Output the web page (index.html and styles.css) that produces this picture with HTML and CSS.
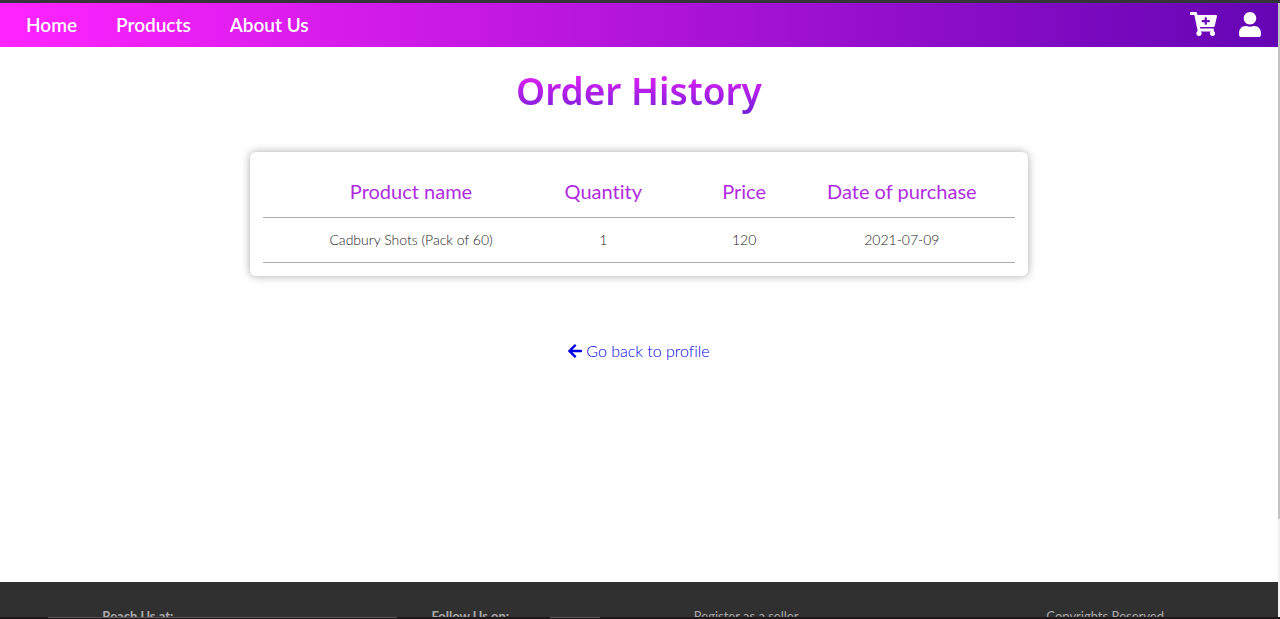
FILE: index.html
```html
<!DOCTYPE html>
<html lang="en">
<head>
<meta charset="utf-8">
<title>Order History</title>
<link rel="stylesheet" href="styles.css">
</head>
<body>
<div class="view">
  <div class="page">
    <header class="navbar">
      <nav class="nav-links">
        <a href="#home">Home</a>
        <a href="#products">Products</a>
        <a href="#about">About Us</a>
      </nav>
      <div class="nav-icons">
        <a href="#cart" aria-label="Cart">
          <svg class="icon-cart" viewBox="0 0 576 512"><path fill="currentColor" d="M504.717 320H211.572l6.545 32h268.418c15.401 0 26.816 14.301 23.403 29.319l-5.517 24.276C523.112 414.668 536 433.828 536 456c0 31.202-25.519 56.444-56.824 55.994-29.823-.429-54.35-24.631-55.155-54.447-.44-16.287 6.085-31.049 16.803-41.548H231.176C241.553 426.165 248 440.326 248 456c0 31.813-26.528 57.431-58.67 55.938-28.54-1.325-51.751-24.385-53.251-52.917-1.158-22.034 10.436-41.455 28.051-51.586L93.883 64H24C10.745 64 0 53.255 0 40V24C0 10.745 10.745 0 24 0h102.529c11.401 0 21.228 8.021 23.513 19.19L159.208 64H551.99c15.401 0 26.816 14.301 23.403 29.319l-47.273 208C525.637 312.246 515.923 320 504.717 320zM408 168h-48v-40c0-8.837-7.163-16-16-16h-16c-8.837 0-16 7.163-16 16v40h-48c-8.837 0-16 7.163-16 16v16c0 8.837 7.163 16 16 16h48v40c0 8.837 7.163 16 16 16h16c8.837 0 16-7.163 16-16v-40h48c8.837 0 16-7.163 16-16v-16c0-8.837-7.163-16-16-16z"/></svg>
        </a>
        <a href="#profile" aria-label="Profile">
          <svg class="icon-user" viewBox="0 0 448 512"><path fill="currentColor" d="M224 256c70.7 0 128-57.3 128-128S294.700 0 224 0 96 57.300 96 128s57.300 128 128 128zm89.600 32h-16.700c-22.200 10.200-46.900 16-72.900 16s-50.600-5.800-72.900-16h-16.700C60.200 288 0 348.200 0 422.400V464c0 26.500 21.500 48 48 48h352c26.500 0 48-21.500 48-48v-41.600c0-74.200-60.200-134.400-134.400-134.400z"/></svg>
        </a>
      </div>
    </header>
    <main class="content">
      <h1 class="title">Order History</h1>
      <section class="card">
        <table class="orders">
          <thead>
            <tr><th class="col-name">Product name</th><th class="col-qty">Quantity</th><th class="col-price">Price</th><th class="col-date">Date of purchase</th></tr>
          </thead>
          <tbody>
            <tr><td class="col-name">Cadbury Shots (Pack of 60)</td><td>1</td><td>120</td><td>2021-07-09</td></tr>
          </tbody>
        </table>
      </section>
      <a class="back" href="#profile">
        <svg class="icon-back" viewBox="0 0 448 512"><path fill="currentColor" d="M257.500 445.100l-22.200 22.200c-9.400 9.400-24.600 9.400-33.900 0L7 273c-9.400-9.400-9.400-24.600 0-33.900L201.400 44.700c9.400-9.400 24.600-9.400 33.900 0l22.200 22.200c9.500 9.500 9.300 25-.4 34.300L136.600 216H424c13.300 0 24 10.700 24 24v32c0 13.300-10.700 24-24 24H136.600l120.500 114.800c9.800 9.300 10 24.800.4 34.300z"/></svg>
        <span>Go back to profile</span>
      </a>
    </main>
    <footer class="footer">
      <strong>Reach Us at:</strong>
      <strong>Follow Us on:</strong>
      <a href="#seller">Register as a seller</a>
      <span>Copyrights Reserved</span>
    </footer>
  </div>
  <div class="scrollbar"><div class="thumb"></div></div>
</div>
<div class="taskbar"><i></i><i></i></div>
</body>
</html>
```
FILE: styles.css
```css
* { box-sizing: border-box; }

body {
  margin: 0;
  height: 100vh;
  display: flex;
  flex-direction: column;
  overflow: hidden;
  border-top: 3px solid #35343a;
  background: #fff;
  color: #222;
  font-family: Lato, "Open Sans", sans-serif;
  font-variant-ligatures: none;
}

a { color: inherit; text-decoration: none; }
svg { display: block; }

.view { flex: 1; min-height: 0; display: flex; }

.page {
  flex: 1;
  min-width: 0;
  display: flex;
  flex-direction: column;
  overflow: hidden;
}

.navbar {
  flex: none;
  height: 44px;
  padding: 0 17px 2px 26px;
  display: flex;
  align-items: center;
  justify-content: space-between;
  color: #fff;
  background: linear-gradient(90deg, #ff24ff, #6405b4);
}

.nav-links { display: flex; gap: 39px; font-size: 19px; font-weight: 600; }
.nav-icons { display: flex; align-items: center; gap: 22px; }
.icon-cart { width: 27px; height: 24px; }
.icon-user { width: 22px; height: 25px; }

.content {
  flex: 1;
  display: flex;
  flex-direction: column;
  align-items: center;
}

.title {
  margin: 18px 0 35px;
  font: 600 37px/52px "Noto Sans", "Open Sans", sans-serif;
  color: transparent;
  background: linear-gradient(180deg, #e61ff5 15%, #6b20d8 100%);
  -webkit-background-clip: text;
  background-clip: text;
}

.card {
  width: 60.8%;
  padding: 13px;
  border-radius: 6px;
  background: #fff;
  box-shadow: 0 0 8px rgba(0, 0, 0, 0.35);
}

.orders {
  width: 100%;
  table-layout: fixed;
  border-collapse: collapse;
  text-align: center;
}

.orders tr { border-bottom: 1px solid #aaa; }
.orders th {
  height: 52px;
  padding: 0;
  font-size: 20px;
  font-weight: 400;
  color: #b02be0;
  white-space: nowrap;
}
.orders td { height: 45px; padding: 0; font-size: 14px; font-weight: 300; }
.orders .col-name { width: 32.5%; padding-left: 51px; }
.col-qty { width: 25.5%; }
.col-price { width: 12%; }
.col-date { width: 30%; }

.back {
  margin-top: 64px;
  display: flex;
  align-items: center;
  gap: 4px;
  font-size: 16px;
  font-weight: 300;
  line-height: 22px;
  color: #0000e6;
}
.icon-back { width: 14px; height: 16px; }

.footer {
  flex: none;
  height: 35px;
  padding: 25px 0 0 8%;
  display: grid;
  grid-template-columns: 28% 22.3% 30% 1fr;
  overflow: hidden;
  background: #303030;
  color: #aaa;
  font-size: 13px;
  line-height: 18px;
  white-space: nowrap;
}

.scrollbar { width: 2px; background: #f1f1f1; }
.thumb { height: 84%; background: #c1c1c1; }

.taskbar {
  height: 2px;
  padding-left: 48px;
  display: flex;
  gap: 153px;
  background: #1d171a;
}
.taskbar i { width: 349px; height: 1px; background: #5a5456; }
.taskbar i + i { width: 50px; }
```
